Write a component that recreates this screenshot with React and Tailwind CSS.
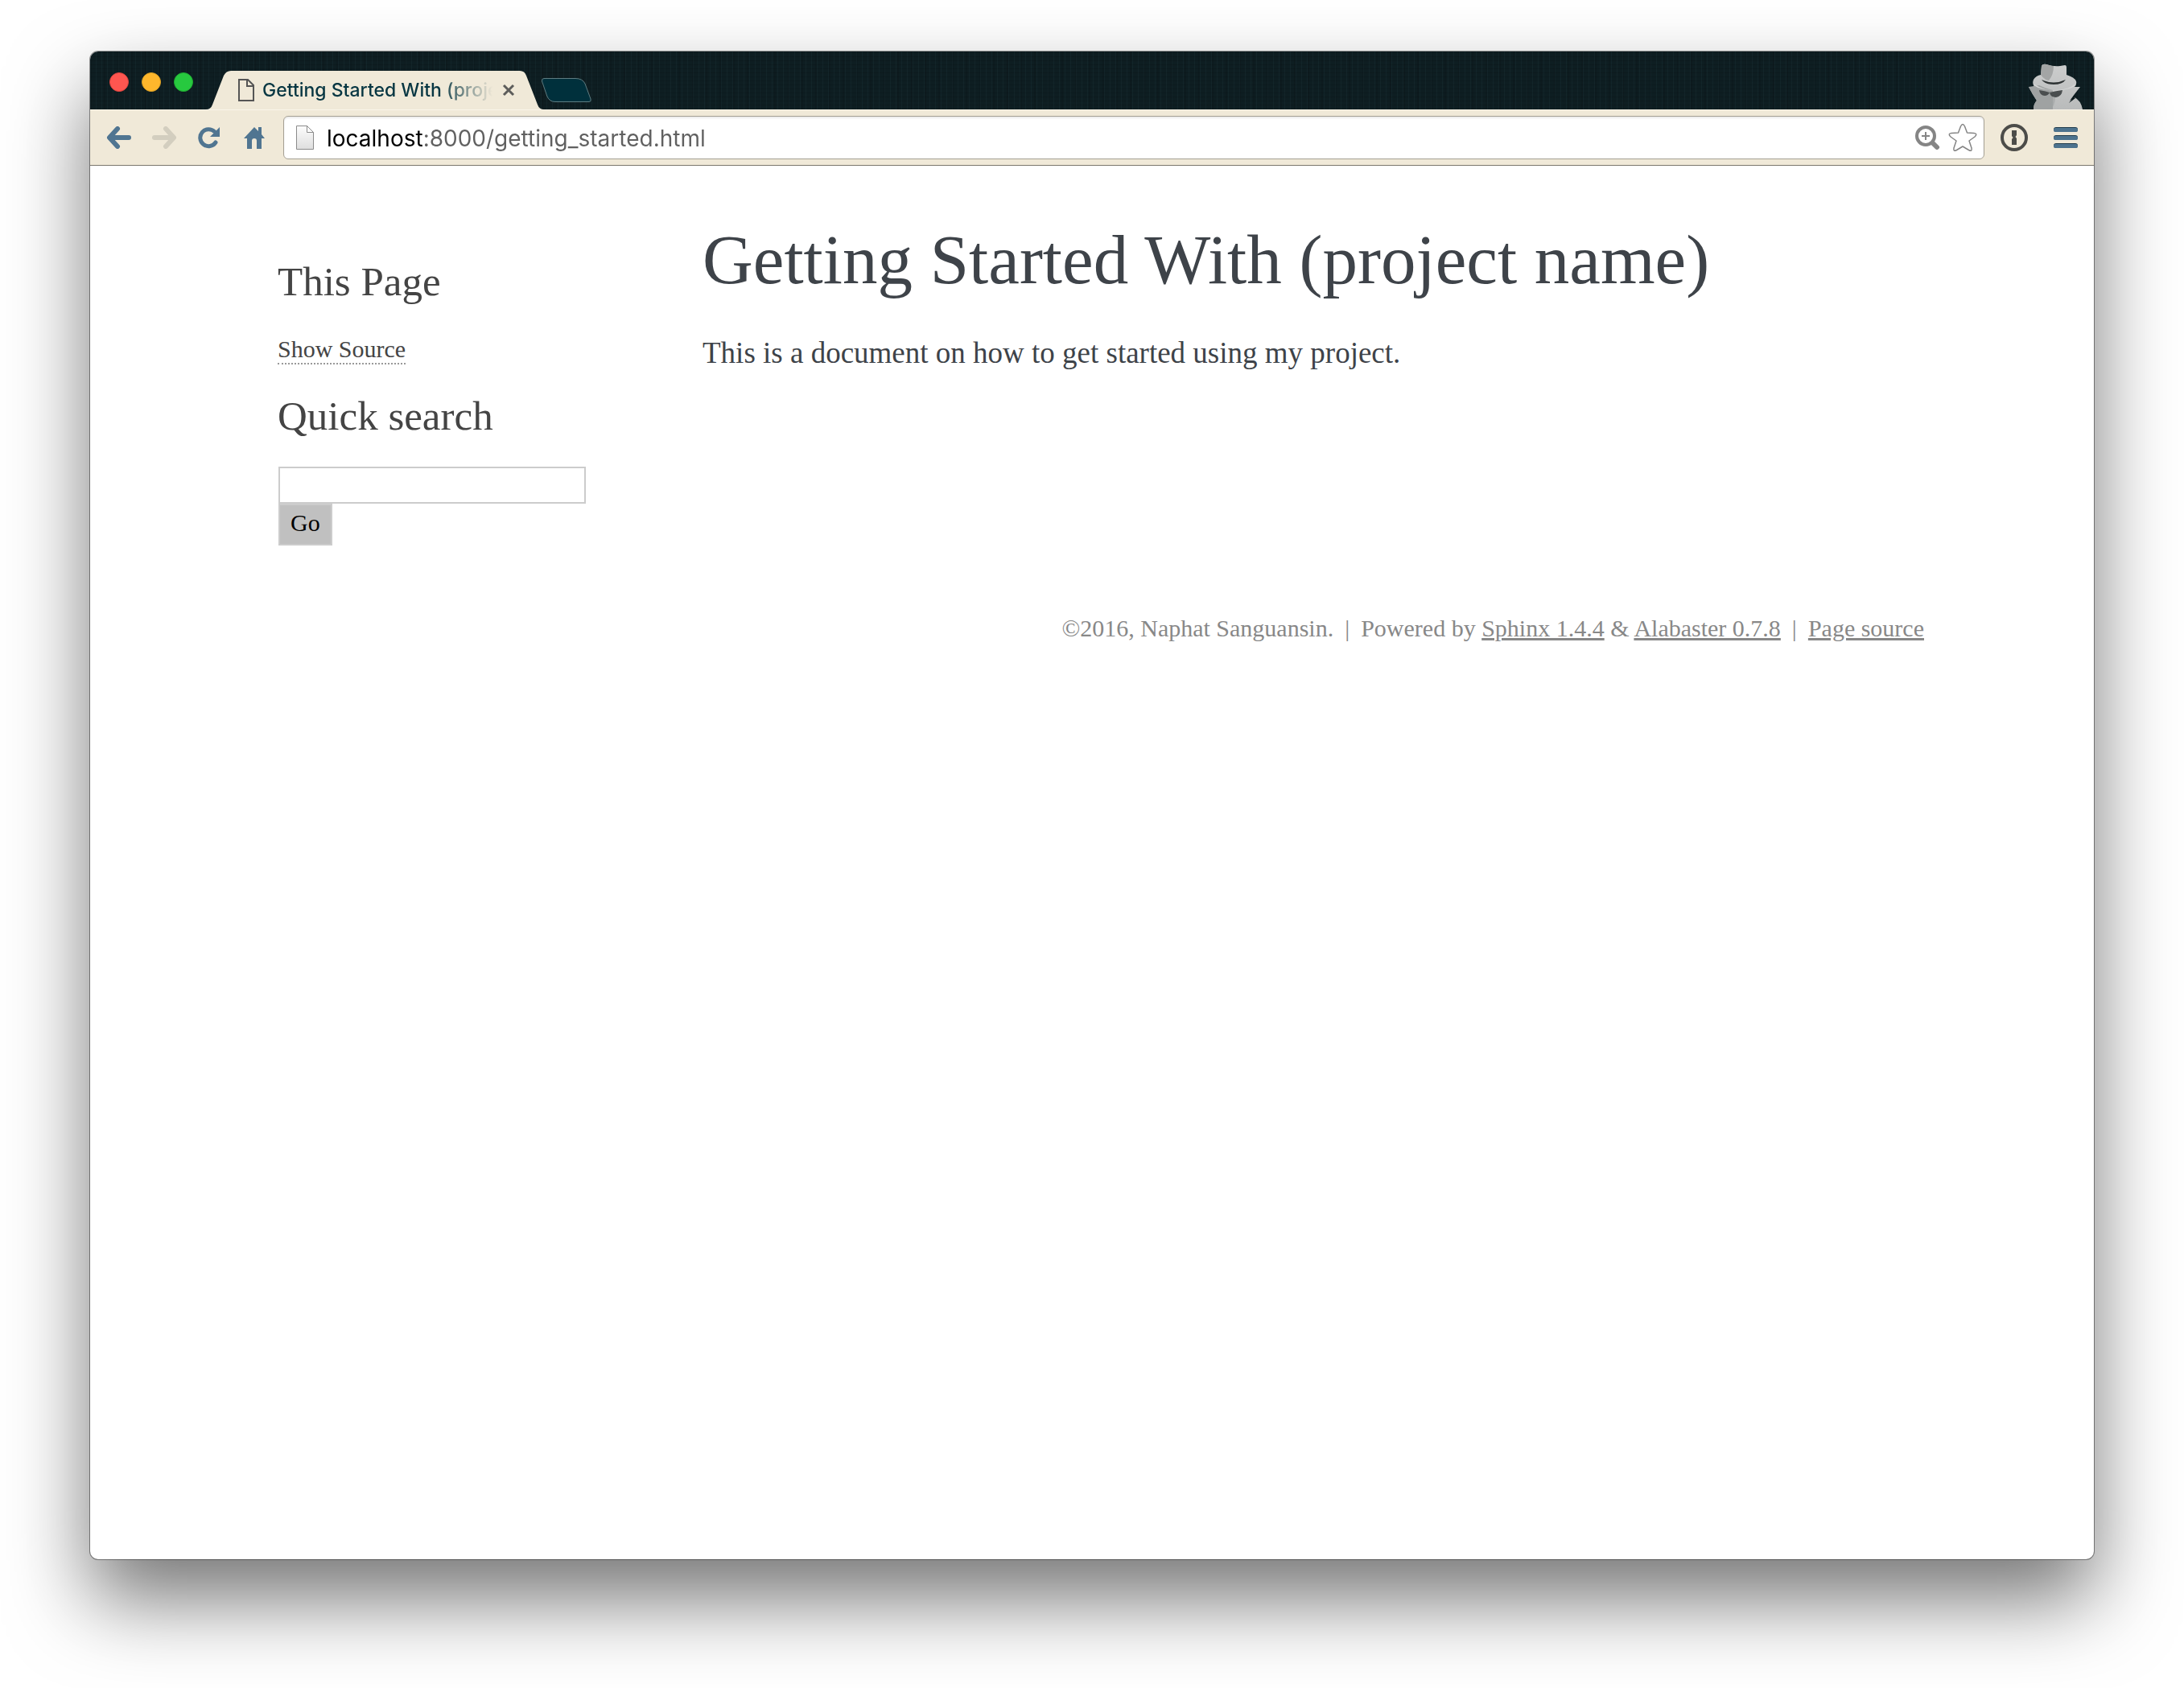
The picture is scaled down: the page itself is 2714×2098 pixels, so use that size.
import React from "react";

const chromeFont = "font-[Inter,Roboto,sans-serif]";

function TrafficLight({ label, tone }) {
  return (
    <button type="button" aria-label={label} className={`size-6 rounded-full border ${tone}`} />
  );
}

function Tab() {
  return (
    <div className="flex h-12">
      <svg width="33" height="48" viewBox="0 0 33 48" fill="#f0e9d8" aria-hidden="true">
        <path d="M0 48H2Q8 48 10 42L24 6Q27 0 33 0V48Z" />
      </svg>
      <div className="flex w-[359px] items-center bg-[#f0e9d8] pl-[9px]">
        <svg width="20" height="28" viewBox="0 0 20 28" fill="none" stroke="#555" strokeWidth="2" aria-hidden="true">
          <path d="M1 1H12L19 8V27H1Z" />
          <path d="M11 1V9H19" />
        </svg>
        <span className="ml-2.5 flex-1 overflow-hidden whitespace-nowrap bg-linear-to-r from-[#073642] from-75% to-transparent to-98% bg-clip-text text-[23px] leading-8 font-medium text-transparent">
          Getting Started With (project name)
        </span>
        <button type="button" aria-label="Close tab" className="flex size-7 items-center justify-center">
          <svg width="16" height="16" viewBox="0 0 16 16" stroke="#5d5d5b" strokeWidth="3">
            <path d="M2 2L14 14M14 2L2 14" />
          </svg>
        </button>
      </div>
      <svg width="30" height="48" viewBox="0 0 30 48" fill="#f0e9d8" aria-hidden="true">
        <path d="M0 0Q6 0 8 6L22 42Q24 48 30 48H0Z" />
      </svg>
    </div>
  );
}

function Incognito() {
  return (
    <svg width="70" height="57" viewBox="0 0 70 57" role="img" aria-label="Incognito">
      <defs>
        <linearGradient id="coat" x1="0" y1="0" x2="0" y2="1">
          <stop offset="0" stopColor="#cccdcd" />
          <stop offset="1" stopColor="#b9bbbb" />
        </linearGradient>
      </defs>
      <path fill="url(#coat)" d="M1 29L8 29Q5 25 7 20Q10 15 16 14L17 3Q18 0 23 1Q32 4 40 3L46 2Q48 2 48 5V14Q58 17 60 22Q61 26 58 29L65 29L52 46L58 42Q66 46 68 57H7Q7 50 11 46Q6 39 1 29Z" />
      <path fill="#9fa2a2" d="M1 29L14 27Q22 31 31 33V57H7Q7 50 11 46Q6 39 1 29Z" />
      <path fill="#a3a5a5" d="M17 3Q18 0 23 1Q29 3 32 3Q32 14 26 21Q20 20 16 14Z" />
      <path fill="#2f3435" d="M17 20Q32 27 47 20Q43 26 32 26Q21 26 17 20Z" />
      <path fill="#d4d5d5" d="M7 25Q20 34 34 33Q50 33 59 25Q58 29 52 31Q34 36 16 31Q8 29 7 25Z" />
      <path fill="#4a4e4f" d="M14 33Q21 34 27 36Q25 40 21 40Q15 40 14 33ZM27 36Q35 34 43 33Q42 41 35 42Q28 42 27 36Z" />
      <path fill="#9fa2a2" opacity=".6" d="M24 57Q31 48 31 41L34 42Q34 50 29 57Z" />
      <path fill="#0d1a1d" d="M65 29L51 49L59 43L56 41Z" />
    </svg>
  );
}

function NavButton({ label, children, size = "w-14" }) {
  return (
    <button type="button" aria-label={label} className={`flex h-14 shrink-0 items-center justify-center ${size}`}>
      {children}
    </button>
  );
}

function BrowserChrome() {
  return (
    <header className={chromeFont}>
      <div className="flex h-[72px] items-end bg-[#0e1e22] bg-[repeating-linear-gradient(90deg,rgba(60,100,110,0.10)_0_1px,transparent_1px_7px),repeating-linear-gradient(0deg,rgba(0,0,0,0.12)_0_1px,transparent_1px_5px),repeating-linear-gradient(90deg,rgba(0,0,0,0.10)_0_2px,transparent_2px_17px)]">
        <div className="flex items-center gap-4 self-stretch pt-1 pr-[14px] pl-6">
          <TrafficLight label="Close window" tone="border-[#e0443e] bg-[#ff5650]" />
          <TrafficLight label="Minimize window" tone="border-[#dea123] bg-[#ffb72c]" />
          <TrafficLight label="Zoom window" tone="border-[#1fab31] bg-[#27c93f]" />
        </div>
        <Tab />
        <button type="button" aria-label="New tab" className="-ml-1 mb-2">
          <svg width="64" height="32" viewBox="0 0 64 32" fill="#00303c" stroke="#5f7c81" strokeWidth="1">
            <path d="M4 1.500H43Q52 1.500 55 8L62 27Q63 30.500 60 30.500H18Q11 30.500 8 24L1.500 5Q1 1.500 4 1.500Z" />
          </svg>
        </button>
        <div className="ml-auto pr-3">
          <Incognito />
        </div>
      </div>
      <div className="flex h-[70px] items-center border-t border-b border-t-[#faf6ea] border-b-[#7a766c] bg-[#f0e9d8] pr-[3px] pl-2">
        <NavButton label="Back">
          <svg width="32" height="28" viewBox="0 0 32 28" fill="none" stroke="#507591" strokeWidth="6" strokeLinecap="round" strokeLinejoin="round">
            <path d="M14 3L4 14L14 25" />
            <path d="M5 14H28" />
          </svg>
        </NavButton>
        <NavButton label="Forward">
          <svg width="32" height="28" viewBox="0 0 32 28" fill="none" stroke="#d3cebf" strokeWidth="6" strokeLinecap="round" strokeLinejoin="round">
            <path d="M18 3L28 14L18 25" />
            <path d="M27 14H4" />
          </svg>
        </NavButton>
        <NavButton label="Reload">
          <svg width="28" height="28" viewBox="0 0 28 28" fill="none" stroke="#507591" strokeWidth="5">
            <path strokeLinecap="round" d="M22 20A10.500 10.500 0 1 1 20.500 6.500" />
            <path fill="#507591" stroke="none" d="M27 1V13H15Z" />
          </svg>
        </NavButton>
        <NavButton label="Home">
          <svg width="26" height="28" viewBox="0 0 26 28" fill="#507591">
            <path d="M13 1L18 6V1H22V10L26 15H22V28H16V18Q16 15 13 15Q10 15 10 18V28H4V15H0Z" />
          </svg>
        </NavButton>
        <div className="ml-2 flex h-[54px] min-w-0 flex-1 items-center rounded-md border border-[#a5a094] bg-white pr-2 pl-[15px] shadow-[inset_0_2px_2px_rgba(0,0,0,0.08)]">
          <svg width="22" height="30" viewBox="0 0 22 30" stroke="#8b8b8b" strokeWidth="1" className="shrink-0" aria-hidden="true">
            <defs>
              <linearGradient id="sheet" x1="0" y1="0" x2="0" y2="1">
                <stop offset="0" stopColor="#fdfdfd" />
                <stop offset="1" stopColor="#dedede" />
              </linearGradient>
            </defs>
            <path fill="url(#sheet)" d="M.5 .5H13.500L21.500 8.500V29.500H.5Z" />
            <path fill="#fff" d="M13.500 .5V8.500H21.500Z" />
          </svg>
          <input
            type="text"
            aria-label="Address"
            defaultValue="localhost:8000/getting_started.html"
            className="ml-4 min-w-0 flex-1 bg-[linear-gradient(90deg,#000_119px,#606060_119px)] bg-clip-text pt-0.5 text-[28px] leading-10 text-transparent outline-none"
          />
          <button type="button" aria-label="Page zoom" className="mr-2.5">
            <svg width="32" height="32" viewBox="0 0 32 32" fill="none" stroke="#858585">
              <circle cx="14" cy="14" r="11" strokeWidth="4" />
              <path strokeWidth="2" d="M14 9V19M9 14H19" />
              <path strokeWidth="6" strokeLinecap="round" d="M23 23L28 28" />
            </svg>
          </button>
          <button type="button" aria-label="Bookmark this page">
            <svg width="36" height="36" viewBox="0 0 36 36" fill="#fff" stroke="#858585" strokeWidth="1.500" strokeLinejoin="round">
              <path d="M15.500 4Q18 -1 20.500 4L23.500 12L32 12.500Q37 13 33 17L26 22L29 31Q30 36 25.500 33.500L18 29L10.500 33.500Q6 36 7 31L10 22L3 17Q-1 13 4 12.500L12.500 12Z" />
            </svg>
          </button>
        </div>
        <div className="ml-[5px] flex">
          <NavButton label="Password manager" size="w-16">
            <svg width="36" height="36" viewBox="0 0 36 36" fill="none" stroke="#4c4c49">
              <circle cx="18" cy="18" r="15" strokeWidth="4" />
              <path fill="#4c4c49" stroke="none" d="M15 9H21V15L19.500 17L21 19V27H15V20L16.500 18L15 16Z" />
            </svg>
          </NavButton>
          <NavButton label="Menu" size="w-16">
            <svg width="30" height="28" viewBox="0 0 30 28">
              <g fill="#213c4c">
                <rect y="1" width="30" height="6" rx="3" />
                <rect y="11" width="30" height="6" rx="3" />
                <rect y="21" width="30" height="6" rx="3" />
              </g>
              <g fill="#4d738e">
                <rect y="2" width="30" height="5" rx="2.500" />
                <rect y="12" width="30" height="5" rx="2.500" />
                <rect y="22" width="30" height="5" rx="2.500" />
              </g>
            </svg>
          </NavButton>
        </div>
      </div>
    </header>
  );
}

function Separator() {
  return <span className="mx-[14px]">|</span>;
}

function Sidebar() {
  return (
    <aside className="w-[484px] shrink-0 px-[22px] pt-[49px] text-[30px] leading-[42px] text-[#444]">
      <h3 className="mb-[33px] text-[51px] leading-[60px]">This Page</h3>
      <p className="mb-8">
        <a href="#source" className="border-b-2 border-dotted border-[#999] pb-px">Show Source</a>
      </p>
      <h3 className="mb-[33px] text-[51px] leading-[60px]">
        <label htmlFor="quick-search">Quick search</label>
      </h3>
      <form className="flex flex-col items-start pl-px" onSubmit={(event) => event.preventDefault()}>
        <input id="quick-search" type="text" className="h-[46px] w-[382px] border-2 border-[#ccc] px-2 outline-none" />
        <button type="submit" className="h-[52px] border-2 border-[#ccc] bg-[#c0c0c0] px-[13px] pb-1 leading-none text-black">
          Go
        </button>
      </form>
    </aside>
  );
}

export default function App() {
  return (
    <div className="flex min-h-screen flex-col bg-white px-28 pt-16 pb-40">
      <div className="flex flex-1 flex-col overflow-hidden rounded-[10px] bg-white shadow-[0_0_0_1px_rgba(0,0,0,0.4),0_50px_100px_rgba(0,0,0,0.54)]">
        <BrowserChrome />
        <div className="mx-auto w-full max-w-[2068px] pt-[65px] font-['Liberation_Serif',serif]">
          <div className="flex">
            <Sidebar />
            <main className="flex-1 px-[66px] text-[#3e4349]">
              <h1 className="mb-[38px] text-[87px] leading-[104px]">Getting Started With (project name)</h1>
              <p className="text-[37px] leading-[52px]">This is a document on how to get started using my project.</p>
            </main>
          </div>
          <footer className="mt-[82px] text-right text-[30px] leading-[42px] text-[#888]">
            ©2016, Naphat Sanguansin.
            <Separator />
            Powered by <a href="#sphinx" className="underline">Sphinx 1.4.4</a> &amp;{" "}
            <a href="#alabaster" className="underline">Alabaster 0.7.8</a>
            <Separator />
            <a href="#page-source" className="underline">Page source</a>
          </footer>
        </div>
      </div>
    </div>
  );
}
